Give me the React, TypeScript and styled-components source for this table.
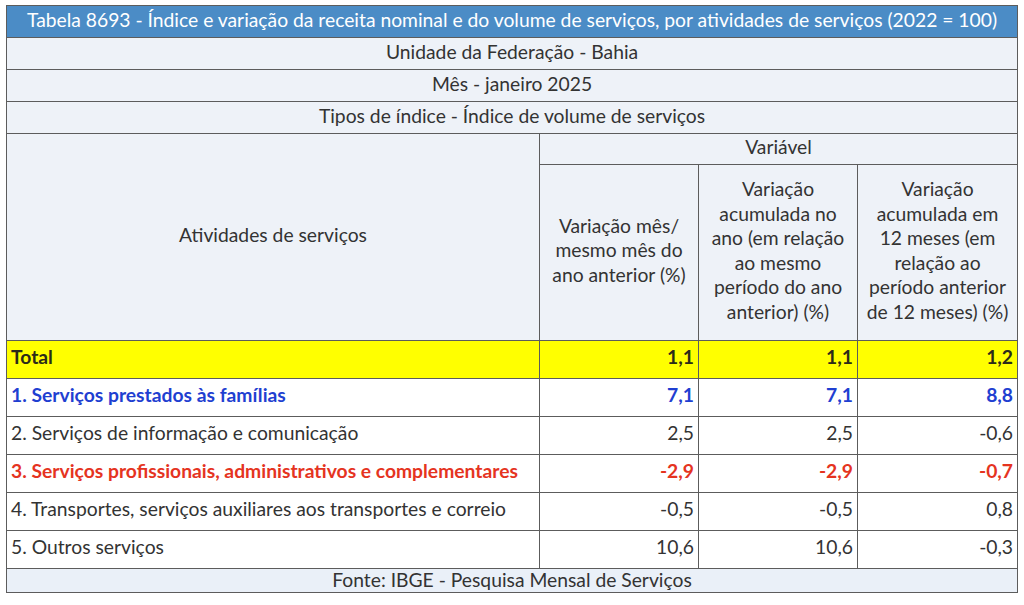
import React from 'react'
import styled, { createGlobalStyle } from 'styled-components'

type Tone = 'total' | 'blue' | 'plain' | 'red'

interface Row {
  label: string
  values: string[]
  tone: Tone
}

const rows: Row[] = [
  { label: 'Total', values: ['1,1', '1,1', '1,2'], tone: 'total' },
  { label: '1. Serviços prestados às famílias', values: ['7,1', '7,1', '8,8'], tone: 'blue' },
  { label: '2. Serviços de informação e comunicação', values: ['2,5', '2,5', '-0,6'], tone: 'plain' },
  {
    label: '3. Serviços profissionais, administrativos e complementares',
    values: ['-2,9', '-2,9', '-0,7'],
    tone: 'red',
  },
  {
    label: '4. Transportes, serviços auxiliares aos transportes e correio',
    values: ['-0,5', '-0,5', '0,8'],
    tone: 'plain',
  },
  { label: '5. Outros serviços', values: ['10,6', '10,6', '-0,3'], tone: 'plain' },
]

const toneColor: Record<Tone, string> = {
  total: '#2b2b1a',
  blue: '#1f3fd1',
  plain: '#333333',
  red: '#e5341f',
}

const GlobalStyle = createGlobalStyle`
  body {
    margin: 0;
    background: #ffffff;
    font-family: Lato, "Open Sans", sans-serif;
  }
`

const Page = styled.div`
  padding: 5px 6px;
`

const Table = styled.table`
  width: 1011px;
  border-collapse: collapse;
  table-layout: fixed;
  font-size: 19.3px;
  color: #333333;
`

const Cell = styled.td`
  border: 1px solid #5c5c5c;
  padding: 0 4px 4px;
  line-height: 24px;
`

const TitleCell = styled(Cell)`
  height: 27px;
  background: #4b8cc6;
  color: #ffffff;
  text-align: center;
`

const InfoCell = styled(Cell)`
  height: 27px;
  background: #eef2f8;
  text-align: center;
`

const HeadCell = styled(Cell)<{ $tall?: boolean }>`
  height: ${(p) => (p.$tall ? '171px' : '26px')};
  background: #eef2f8;
  text-align: center;
  line-height: 24.5px;
`

const LabelCell = styled(Cell)<{ $tone: Tone }>`
  height: 32px;
  padding-bottom: 5px;
  background: ${(p) => (p.$tone === 'total' ? '#ffff00' : '#ffffff')};
  color: ${(p) => toneColor[p.$tone]};
  font-weight: ${(p) => (p.$tone === 'plain' ? 400 : 700)};
  white-space: nowrap;
`

const ValueCell = styled(LabelCell)`
  text-align: right;
`

const FootCell = styled(Cell)`
  height: 21px;
  padding-bottom: 2px;
  line-height: 20px;
  background: #eaf0f8;
  text-align: center;
`

export default function App() {
  return (
    <Page>
      <GlobalStyle />
      <Table>
        <colgroup>
          <col style={{ width: 533 }} />
          <col style={{ width: 159 }} />
          <col style={{ width: 159 }} />
          <col style={{ width: 160 }} />
        </colgroup>
        <tbody>
          <tr>
            <TitleCell colSpan={4}>
              Tabela 8693 - Índice e variação da receita nominal e do volume de serviços, por atividades de
              serviços (2022 = 100)
            </TitleCell>
          </tr>
          <tr>
            <InfoCell colSpan={4}>Unidade da Federação - Bahia</InfoCell>
          </tr>
          <tr>
            <InfoCell colSpan={4}>Mês - janeiro 2025</InfoCell>
          </tr>
          <tr>
            <InfoCell colSpan={4}>Tipos de índice - Índice de volume de serviços</InfoCell>
          </tr>
          <tr>
            <HeadCell rowSpan={2}>Atividades de serviços</HeadCell>
            <HeadCell colSpan={3}>Variável</HeadCell>
          </tr>
          <tr>
            <HeadCell $tall>
              Variação mês/
              <br />
              mesmo mês do
              <br />
              ano anterior (%)
            </HeadCell>
            <HeadCell $tall>
              Variação
              <br />
              acumulada no
              <br />
              ano (em relação
              <br />
              ao mesmo
              <br />
              período do ano
              <br />
              anterior) (%)
            </HeadCell>
            <HeadCell $tall>
              Variação
              <br />
              acumulada em
              <br />
              12 meses (em
              <br />
              relação ao
              <br />
              período anterior
              <br />
              de 12 meses) (%)
            </HeadCell>
          </tr>
          {rows.map((row) => (
            <tr key={row.label}>
              <LabelCell $tone={row.tone}>{row.label}</LabelCell>
              {row.values.map((v, i) => (
                <ValueCell key={i} $tone={row.tone}>
                  {v}
                </ValueCell>
              ))}
            </tr>
          ))}
          <tr>
            <FootCell colSpan={4}>Fonte: IBGE - Pesquisa Mensal de Serviços</FootCell>
          </tr>
        </tbody>
      </Table>
    </Page>
  )
}
